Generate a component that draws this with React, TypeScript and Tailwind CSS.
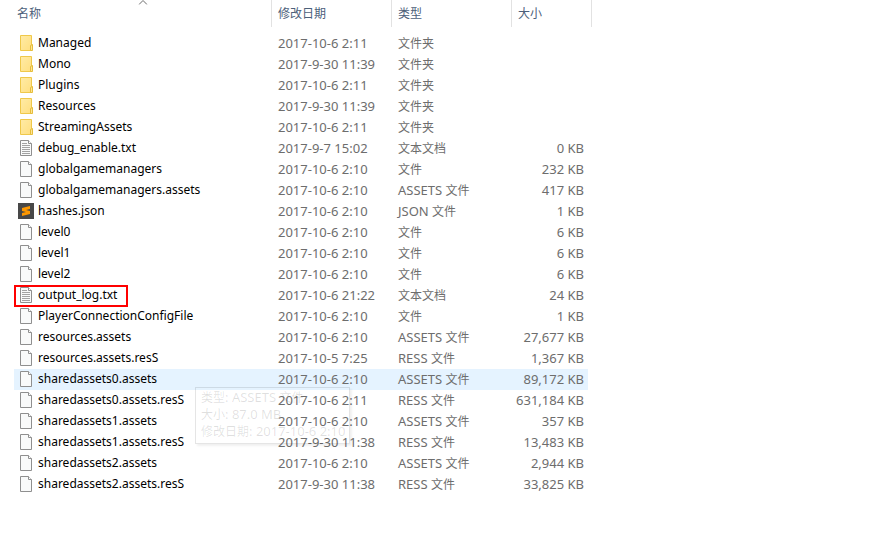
import type { ReactNode } from "react";

type Kind = "folder" | "text" | "file" | "sublime";

type Entry = {
  name: string;
  date: string;
  type: string;
  size?: string;
  kind: Kind;
};

const entries: Entry[] = [
  { name: "Managed", date: "2017-10-6 2:11", type: "文件夹", kind: "folder" },
  { name: "Mono", date: "2017-9-30 11:39", type: "文件夹", kind: "folder" },
  { name: "Plugins", date: "2017-10-6 2:11", type: "文件夹", kind: "folder" },
  { name: "Resources", date: "2017-9-30 11:39", type: "文件夹", kind: "folder" },
  { name: "StreamingAssets", date: "2017-10-6 2:11", type: "文件夹", kind: "folder" },
  { name: "debug_enable.txt", date: "2017-9-7 15:02", type: "文本文档", size: "0 KB", kind: "text" },
  { name: "globalgamemanagers", date: "2017-10-6 2:10", type: "文件", size: "232 KB", kind: "file" },
  { name: "globalgamemanagers.assets", date: "2017-10-6 2:10", type: "ASSETS 文件", size: "417 KB", kind: "file" },
  { name: "hashes.json", date: "2017-10-6 2:10", type: "JSON 文件", size: "1 KB", kind: "sublime" },
  { name: "level0", date: "2017-10-6 2:10", type: "文件", size: "6 KB", kind: "file" },
  { name: "level1", date: "2017-10-6 2:10", type: "文件", size: "6 KB", kind: "file" },
  { name: "level2", date: "2017-10-6 2:10", type: "文件", size: "6 KB", kind: "file" },
  { name: "output_log.txt", date: "2017-10-6 21:22", type: "文本文档", size: "24 KB", kind: "text" },
  { name: "PlayerConnectionConfigFile", date: "2017-10-6 2:10", type: "文件", size: "1 KB", kind: "file" },
  { name: "resources.assets", date: "2017-10-6 2:10", type: "ASSETS 文件", size: "27,677 KB", kind: "file" },
  { name: "resources.assets.resS", date: "2017-10-5 7:25", type: "RESS 文件", size: "1,367 KB", kind: "file" },
  { name: "sharedassets0.assets", date: "2017-10-6 2:10", type: "ASSETS 文件", size: "89,172 KB", kind: "file" },
  { name: "sharedassets0.assets.resS", date: "2017-10-6 2:11", type: "RESS 文件", size: "631,184 KB", kind: "file" },
  { name: "sharedassets1.assets", date: "2017-10-6 2:10", type: "ASSETS 文件", size: "357 KB", kind: "file" },
  { name: "sharedassets1.assets.resS", date: "2017-9-30 11:38", type: "RESS 文件", size: "13,483 KB", kind: "file" },
  { name: "sharedassets2.assets", date: "2017-10-6 2:10", type: "ASSETS 文件", size: "2,944 KB", kind: "file" },
  { name: "sharedassets2.assets.resS", date: "2017-9-30 11:38", type: "RESS 文件", size: "33,825 KB", kind: "file" },
];

const marked = "output_log.txt";
const hovered = "sharedassets0.assets";

function FileIcon({ kind }: { kind: Kind }) {
  if (kind === "folder") {
    return (
      <svg width="16" height="16" viewBox="0 0 16 16" className="shrink-0" aria-hidden="true">
        <defs>
          <linearGradient id="folder" x1="0" y1="0" x2="1" y2="1">
            <stop offset="0" stopColor="#ffeba6" />
            <stop offset="1" stopColor="#ffdf80" />
          </linearGradient>
        </defs>
        <path d="M2.5 .5h11v15h-11z" fill="url(#folder)" stroke="#efc84a" />
        <path d="M12.5 15.5v-5l2-1v6z" fill="#ffe494" stroke="#e5bd3c" />
      </svg>
    );
  }
  if (kind === "sublime") {
    return (
      <svg width="16" height="16" viewBox="0 0 16 16" className="shrink-0" aria-hidden="true">
        <path d="M0 0h16v16H0z" fill="#484848" />
        <path d="M4 5 12 3v3L8 7l4 1v3l-8 2v-3l4-1-4-1z" fill="#ff9800" />
      </svg>
    );
  }
  return (
    <svg width="16" height="16" viewBox="0 0 16 16" className="shrink-0" aria-hidden="true">
      <path d="M2.5 .5h8l3 3v12h-11z" fill="#f9fafa" stroke="#8f8f8f" />
      <path d="M10.5 .5v3h3" fill="#fff" stroke="#8f8f8f" />
      {kind === "text" && (
        <path d="M4 3.5h5M4 5.5h8M4 7.5h8M4 9.5h8M4 11.5h8M4 13.5h8" stroke="#a3a3a3" />
      )}
    </svg>
  );
}

// Chinese glyphs are set one size below the latin text
function Mixed({ text }: { text: string }) {
  return (
    <>
      {text.split(/([\u4e00-\u9fff]+)/).map((part, i) =>
        i % 2 ? (
          <span key={i} className="text-[12px]">
            {part}
          </span>
        ) : (
          part
        )
      )}
    </>
  );
}

function HeaderCell({ children, className = "pl-1.5" }: { children?: ReactNode; className?: string }) {
  return (
    <th className="p-0 font-normal">
      <button
        type="button"
        className={`relative mb-1.5 block h-[27px] w-full border-r border-[#e2e2e2] text-left text-[12px] text-[#4c607a] ${className}`}
      >
        {children}
      </button>
    </th>
  );
}

function FileTip() {
  return (
    <div
      role="tooltip"
      className="absolute top-[18px] left-[181px] z-10 border border-black/10 pt-px pr-1 pb-[3px] pl-[5px] text-[13px] leading-[17px] whitespace-nowrap text-black/12 shadow-[2px_2px_2px_rgba(0,0,0,0.06)]"
    >
      <div><Mixed text="类型: ASSETS 文件" /></div>
      <div><Mixed text="大小: 87.0 MB" /></div>
      <div><Mixed text="修改日期: 2017-10-6 2:10" /></div>
    </div>
  );
}

export default function App() {
  return (
    <main className="min-h-screen bg-white pl-3.5 font-['Noto_Sans','Noto_Sans_CJK_SC',sans-serif] text-[13px] leading-5 text-[#6d6d6d]">
      <table className="w-[578px] table-fixed border-collapse">
        <colgroup>
          <col className="w-[258px]" />
          <col className="w-[120px]" />
          <col className="w-[120px]" />
          <col className="w-[80px]" />
        </colgroup>
        <thead>
          <tr>
            <HeaderCell className="pl-[3px]">
              名称
              <svg width="9" height="5" viewBox="0 0 9 5" className="absolute top-0 left-1/2 -translate-x-1/2" fill="none" stroke="#6d6d6d" aria-hidden="true">
                <path d="m.5 4.5 4-4 4 4" />
              </svg>
            </HeaderCell>
            <HeaderCell>修改日期</HeaderCell>
            <HeaderCell>类型</HeaderCell>
            <HeaderCell>大小</HeaderCell>
          </tr>
        </thead>
        <tbody>
          {entries.map((e) => {
            const bg = e.name === hovered ? "bg-[#e5f3ff]" : "";
            return (
              <tr key={e.name} className="h-[21px] align-top">
                <td className={`relative p-0 text-[12px] text-black ${bg}`}>
                  <div className="flex h-5 items-center gap-1 pl-1">
                    <FileIcon kind={e.kind} />
                    <span>{e.name}</span>
                  </div>
                  {e.name === marked && (
                    <div className="absolute top-0 left-0 h-[22px] w-[114px] border-2 border-[#ff0000]" />
                  )}
                  {e.name === hovered && <FileTip />}
                </td>
                <td className={`py-0 pr-0 pl-1.5 whitespace-nowrap ${bg}`}>{e.date}</td>
                <td className={`py-0 pr-0 pl-1.5 whitespace-nowrap ${bg}`}>
                  <Mixed text={e.type} />
                </td>
                <td className="p-0 pr-1">
                  <div className={`h-[21px] pr-1 text-right whitespace-nowrap ${bg}`}>{e.size}</div>
                </td>
              </tr>
            );
          })}
        </tbody>
      </table>
    </main>
  );
}
